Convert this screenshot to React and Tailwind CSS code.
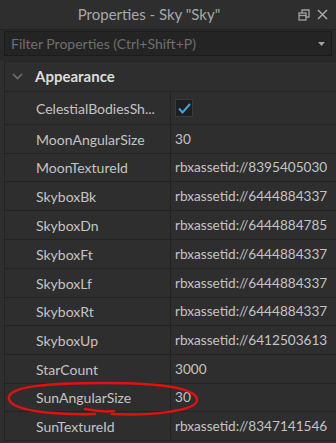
import React from 'react';

const rows = [
  { name: 'MoonAngularSize', value: '30', h: 'h-[29px]' },
  { name: 'MoonTextureId', value: 'rbxassetid://8395405030', h: 'h-[28px]' },
  { name: 'SkyboxBk', value: 'rbxassetid://6444884337', h: 'h-[29px]' },
  { name: 'SkyboxDn', value: 'rbxassetid://6444884785', h: 'h-[29px]' },
  { name: 'SkyboxFt', value: 'rbxassetid://6444884337', h: 'h-[29px]' },
  { name: 'SkyboxLf', value: 'rbxassetid://6444884337', h: 'h-[29px]' },
  { name: 'SkyboxRt', value: 'rbxassetid://6444884337', h: 'h-[28px]' },
  { name: 'SkyboxUp', value: 'rbxassetid://6412503613', h: 'h-[29px]' },
  { name: 'StarCount', value: '3000', h: 'h-[29px]' },
  { name: 'SunAngularSize', value: '30', h: 'h-[28px]' },
  { name: 'SunTextureId', value: 'rbxassetid://8347141546', h: 'h-[29px]' },
];

const Row = ({ name, h, children }) => (
  <div className={`flex ${h} border-b border-[#232323]`}>
    <div className="w-[166px] shrink-0 flex items-center pl-[31px] border-r border-[#232323] text-[#c4c4c4] whitespace-nowrap overflow-hidden">
      {name}
    </div>
    <div className="flex-1 flex items-center pl-[4px] text-[#c4c4c4] text-[13.6px] whitespace-nowrap overflow-hidden">
      {children}
    </div>
  </div>
);

const App = () => {
  return (
    <div
      className="relative w-[336px] h-[443px] overflow-hidden bg-[#2e2e2e] text-[14px]"
      style={{ fontFamily: 'Lato, "Open Sans", sans-serif' }}
    >
      {/* title bar */}
      <div className="h-[30px] flex items-center border-b border-[#222] bg-[#2e2e2e]">
        <div className="flex-1 text-center text-[#a8a8a8] text-[15px]">Properties - Sky "Sky"</div>
        <div className="flex items-center gap-[7px] pr-[8px]">
          <svg width="12" height="12" viewBox="0 0 12 12" fill="none" stroke="#a0a0a0" strokeWidth="1.3">
            <rect x="1" y="4" width="7" height="7" />
            <path d="M4 4V1h7v7H8" />
            <path d="M1 6.5h7" />
          </svg>
          <svg width="11" height="11" viewBox="0 0 11 11" stroke="#a8a8a8" strokeWidth="1.5">
            <path d="M1 1l9 9M10 1l-9 9" />
          </svg>
        </div>
      </div>
      {/* filter */}
      <div className="h-[31px] bg-[#292929] px-[4px] pt-[1px] pb-[5px]">
        <div className="h-full flex items-center justify-between bg-[#242424] border border-[#1c1c1c] pl-[6px] pr-[6px]">
          <span className="text-[#6e6e6e] text-[14px]">Filter Properties (Ctrl+Shift+P)</span>
          <svg width="7" height="4" viewBox="0 0 7 4">
            <path d="M0 0h7L3.5 4z" fill="#a0a0a0" />
          </svg>
        </div>
      </div>
      {/* properties */}
      <div className="ml-[4px] border-l border-[#232323]">
        <div className="h-[31px] flex items-center border-b border-[#232323] border-t border-t-[#252525]">
          <svg className="ml-[7px] mr-[12px]" width="11" height="7" viewBox="0 0 11 7" fill="none" stroke="#6f6f6f" strokeWidth="1.6">
            <path d="M1 1l4.5 4.5L10 1" />
          </svg>
          <span className="font-bold text-[#dcdcdc] text-[15px]">Appearance</span>
        </div>
        <Row name="CelestialBodiesSh..." h="h-[33px]">
          <div className="w-[18px] h-[18px] bg-[#1e1e1e] border border-[#3a3a3a] flex items-center justify-center">
            <svg width="13" height="11" viewBox="0 0 13 11" fill="none" stroke="#3ba3e8" strokeWidth="2">
              <path d="M1 5.5l3.5 4L12 1" />
            </svg>
          </div>
        </Row>
        {rows.map((r) => (
          <Row key={r.name} name={r.name} h={r.h}>
            {r.value}
          </Row>
        ))}
      </div>
      {/* red annotation */}
      <svg className="absolute left-0 top-[378px] pointer-events-none" width="210" height="45" viewBox="0 0 210 45" fill="none">
        <path
          d="M95 36 C60 37 12 34 9 21 C6 8 50 5 105 5 C160 5 197 10 197 22 C197 33 150 38 112 36"
          stroke="#e3100f"
          strokeWidth="2.5"
          strokeLinecap="round"
        />
        <path d="M85 31 C95 33 105 34 114 33" stroke="#e3100f" strokeWidth="2.5" strokeLinecap="round" />
      </svg>
    </div>
  );
};

export default App;
